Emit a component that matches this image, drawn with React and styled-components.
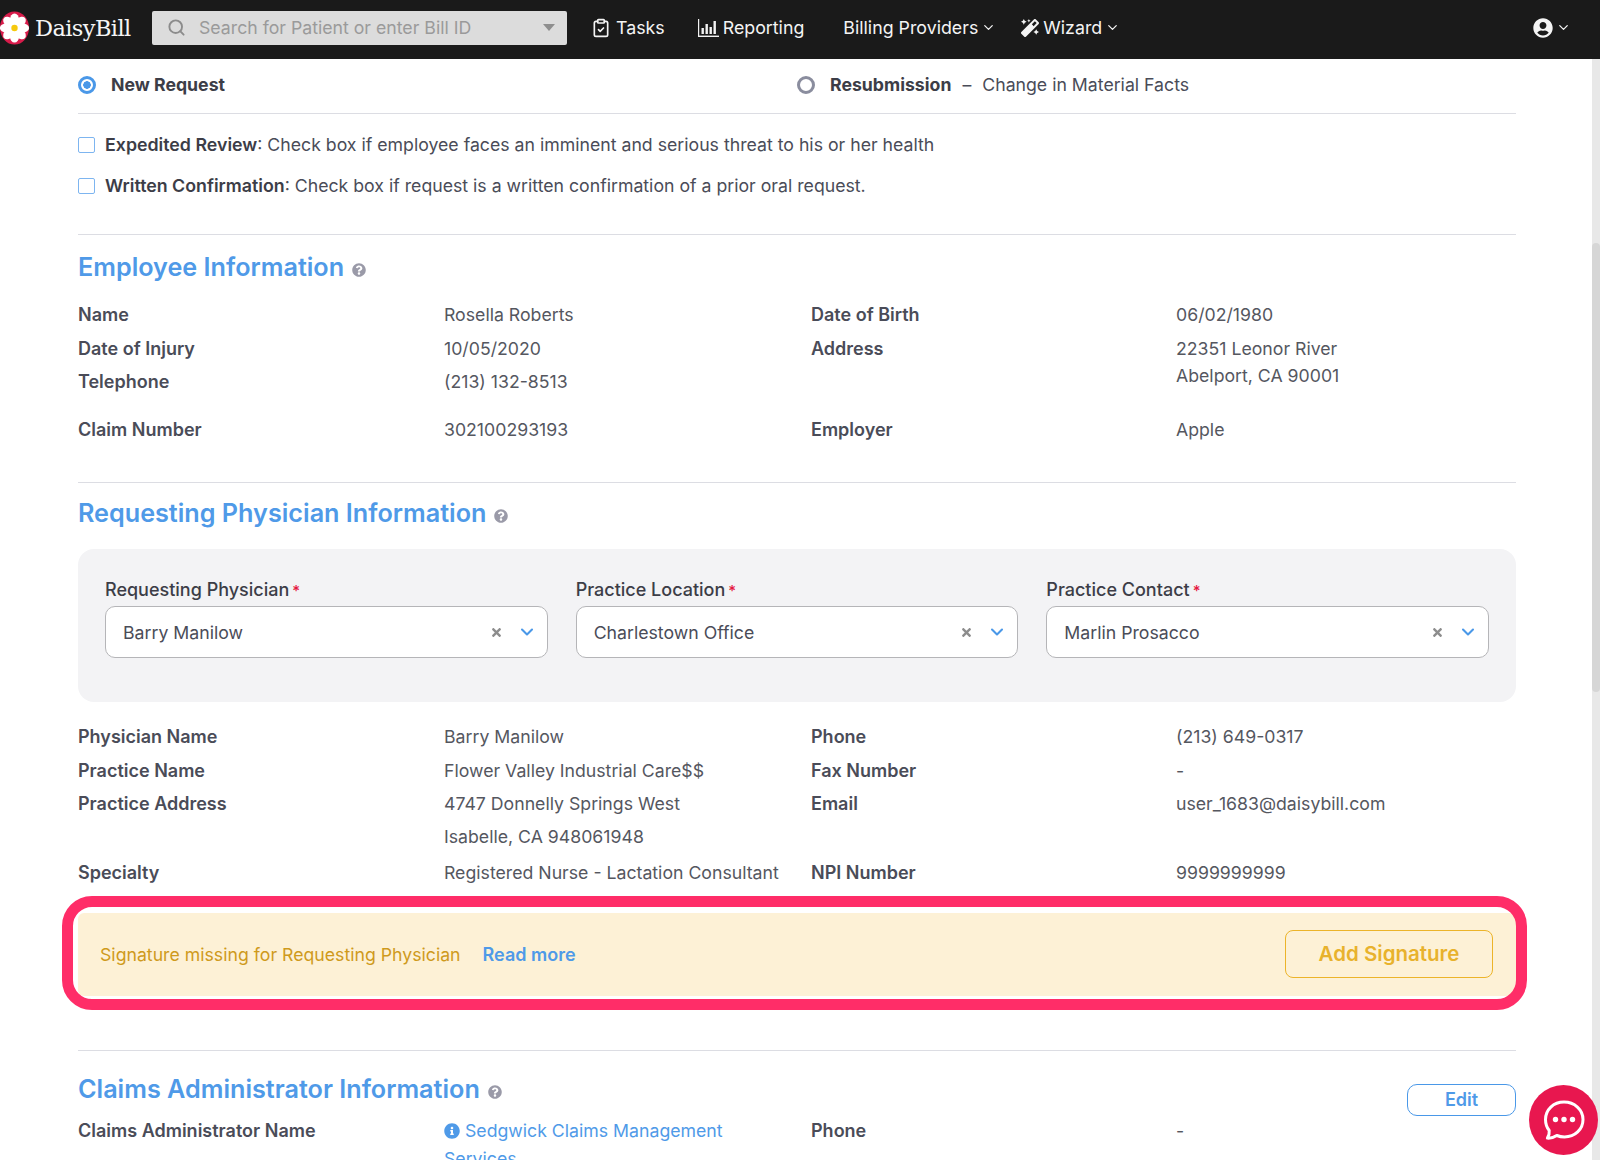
import React from 'react';
import styled, { createGlobalStyle } from 'styled-components';
import { ChevronDown, ClipboardCheck, Search } from 'lucide-react';
import { FaInfoCircle, FaMagic, FaQuestionCircle, FaTimes, FaUserCircle } from 'react-icons/fa';

const GlobalStyle = createGlobalStyle`
  html, body {
    margin: 0;
    padding: 0;
    background: #fff;
  }
  * {
    box-sizing: border-box;
  }
`;

const employeeRows = [
  { label: 'Name', value: 'Rosella Roberts', label2: 'Date of Birth', value2: '06/02/1980' },
  { label: 'Date of Injury', value: '10/05/2020', label2: 'Address', value2: '22351 Leonor River', line2: 'Abelport, CA 90001', rowSpan: 2 },
  { label: 'Telephone', value: '(213) 132-8513' },
  { label: 'Claim Number', value: '302100293193', label2: 'Employer', value2: 'Apple', top: 14 },
];

const physicianRows = [
  { label: 'Physician Name', value: 'Barry Manilow', label2: 'Phone', value2: '(213) 649-0317' },
  { label: 'Practice Name', value: 'Flower Valley Industrial Care$$', label2: 'Fax Number', value2: '-' },
  { label: 'Practice Address', value: '4747 Donnelly Springs West', line: 'Isabelle, CA 948061948', label2: 'Email', value2: 'user_1683@daisybill.com' },
  { label: 'Specialty', value: 'Registered Nurse - Lactation Consultant', label2: 'NPI Number', value2: '9999999999', top: 3 },
];

const selects = [
  { label: 'Requesting Physician', value: 'Barry Manilow' },
  { label: 'Practice Location', value: 'Charlestown Office' },
  { label: 'Practice Contact', value: 'Marlin Prosacco' },
];

const DaisyLogo = () => (
  <svg width="30" height="34" viewBox="0 0 30 34">
    <ellipse cx="14.5" cy="17" rx="14.5" ry="16.5" fill="#d81b4a" />
    {[0, 45, 90, 135, 180, 225, 270, 315].map((angle) => (
      <ellipse key={angle} cx="14.5" cy="9" rx="4.6" ry="6.6" fill="#fff" transform={`rotate(${angle} 14.5 17)`} />
    ))}
    <circle cx="14.5" cy="17" r="3.2" fill="#f6c90e" />
  </svg>
);

const BarsIcon = () => (
  <svg width="21" height="18" viewBox="0 0 21 18" fill="#f2f2f2">
    <rect x="0" y="0" width="1.2" height="18" />
    <rect x="0" y="16.6" width="21" height="1.4" />
    <rect x="3.5" y="9" width="2.4" height="6" />
    <rect x="7.5" y="5" width="2.4" height="10" />
    <rect x="11.5" y="8" width="2.4" height="7" />
    <rect x="15.5" y="2" width="2.4" height="13" />
  </svg>
);

const ChatIcon = () => (
  <svg width="44" height="44" viewBox="0 0 44 44" fill="none">
    <path
      d="M22 4C11.5 4 3.5 11.6 3.5 21.5c0 4.2 1.3 8 3.7 11 .4 3-.6 5.6-1.8 7.6 3.2.2 6.6-.7 9.4-2.6 2.4 1 5 1.5 7.7 1.5 10.5 0 18.5-7.6 18.5-17.5S32.5 4 22 4z"
      stroke="#fff"
      strokeWidth="3"
      strokeLinejoin="round"
    />
    <circle cx="13.5" cy="21.5" r="2.7" fill="#fff" />
    <circle cx="22" cy="21.5" r="2.7" fill="#fff" />
    <circle cx="30.5" cy="21.5" r="2.7" fill="#fff" />
  </svg>
);

const InfoRows = ({ rows }) => (
  <InfoGrid>
    {rows.map((row) => (
      <InfoRow key={row.label} $top={row.top}>
        <InfoLabel>{row.label}</InfoLabel>
        <InfoValue>
          {row.value}
          {row.line && <ExtraLine>{row.line}</ExtraLine>}
        </InfoValue>
        {row.label2 && <InfoLabel>{row.label2}</InfoLabel>}
        {row.label2 && (
          <InfoValue $overhang={row.rowSpan}>
            {row.value2}
            {row.line2 && <ExtraLine $tight>{row.line2}</ExtraLine>}
          </InfoValue>
        )}
      </InfoRow>
    ))}
  </InfoGrid>
);

const App = () => {
  return (
    <Page>
      <GlobalStyle />
      <TopBar>
        <Brand>
          <DaisyLogo />
          <BrandName>DaisyBill</BrandName>
        </Brand>
        <SearchBox>
          <Search size={19} color="#8c8c8c" strokeWidth={2.4} />
          <SearchText>Search for Patient or enter Bill ID</SearchText>
          <SearchCaret />
        </SearchBox>
        <NavItem $left={24}>
          <ClipboardCheck size={20} strokeWidth={2} />
          <NavText $gap={5}>Tasks</NavText>
        </NavItem>
        <NavItem $left={30}>
          <BarsIcon />
          <NavText $gap={4}>Reporting</NavText>
        </NavItem>
        <NavItem $left={36}>
          <NavText>Billing Providers</NavText>
          <ChevronDown size={15} />
        </NavItem>
        <NavItem $left={25}>
          <FaMagic size={18} />
          <NavText $gap={4}>Wizard</NavText>
          <ChevronDown size={15} />
        </NavItem>
        <UserMenu>
          <FaUserCircle size={20} />
          <ChevronDown size={15} />
        </UserMenu>
      </TopBar>

      <Body>
        <Content>
          <RequestRow>
            <RequestOption>
              <Radio $checked />
              <RequestName $gap={15}>New Request</RequestName>
            </RequestOption>
            <RequestOption>
              <Radio />
              <RequestName $gap={15}>Resubmission</RequestName>
              <RequestNote>–</RequestNote>
              <RequestNote>Change in Material Facts</RequestNote>
            </RequestOption>
          </RequestRow>
          <Divider />

          <CheckRow $top={20}>
            <CheckBox />
            <CheckText><strong>Expedited Review</strong>: Check box if employee faces an imminent and serious threat to his or her health</CheckText>
          </CheckRow>
          <CheckRow $top={20}>
            <CheckBox />
            <CheckText><strong>Written Confirmation</strong>: Check box if request is a written confirmation of a prior oral request.</CheckText>
          </CheckRow>
          <Divider $top={38} />

          <SectionTitle $top={15}>
            Employee Information
            <FaQuestionCircle size={14} />
          </SectionTitle>
          <InfoBlock $top={14}>
            <InfoRows rows={employeeRows} />
          </InfoBlock>
          <Divider $top={36} />

          <SectionTitle $top={13}>
            Requesting Physician Information
            <FaQuestionCircle size={14} />
          </SectionTitle>

          <SelectPanel>
            {selects.map((item) => (
              <SelectField key={item.label}>
                <SelectLabel>
                  {item.label}
                  <Required>*</Required>
                </SelectLabel>
                <SelectInput>
                  <SelectValue>{item.value}</SelectValue>
                  <FaTimes size={13} color="#8d8d8d" />
                  <ChevronDown size={20} color="#4a98e8" strokeWidth={2.5} />
                </SelectInput>
              </SelectField>
            ))}
          </SelectPanel>

          <InfoBlock $top={18}>
            <InfoRows rows={physicianRows} />
          </InfoBlock>

          <Alert>
            <AlertHighlight />
            <AlertText>Signature missing for Requesting Physician</AlertText>
            <ReadMore>Read more</ReadMore>
            <SignatureButton>Add Signature</SignatureButton>
          </Alert>

          <Divider $top={54} />

          <ClaimsHeader>
            <SectionTitle $top={13}>
              Claims Administrator Information
              <FaQuestionCircle size={14} />
            </SectionTitle>
            <EditButton>Edit</EditButton>
          </ClaimsHeader>
          <ClaimsRow>
            <InfoLabel>Claims Administrator Name</InfoLabel>
            <ClaimsLink>
              <FaInfoCircle size={16} />
              {' '}Sedgwick Claims Management Services
            </ClaimsLink>
            <InfoLabel>Phone</InfoLabel>
            <InfoValue>-</InfoValue>
          </ClaimsRow>
        </Content>
        <ScrollTrack>
          <ScrollThumb />
        </ScrollTrack>
      </Body>

      <ChatBubble>
        <ChatIcon />
      </ChatBubble>
    </Page>
  );
};

export default App;

// Styled Components
const Page = styled.div`
  position: relative;
  width: 1600px;
  height: 1160px;
  overflow: hidden;
  background: #fff;
  font-family: 'Inter', 'Liberation Sans', sans-serif;
  color: #4a4c58;
`;

const TopBar = styled.header`
  display: flex;
  align-items: center;
  height: 59px;
  padding-bottom: 4px;
  background: #1a1a1a;
  color: #f4f4f4;
`;

const Brand = styled.div`
  display: flex;
  align-items: center;
  gap: 5px;
  width: 152px;
`;

const BrandName = styled.span`
  font-family: 'DejaVu Serif', 'Liberation Serif', serif;
  font-size: 22.5px;
  letter-spacing: -0.6px;
  color: #f5f5f5;
`;

const SearchBox = styled.div`
  display: flex;
  align-items: center;
  width: 415px;
  height: 34px;
  padding: 0 12px 0 15px;
  background: #dcdcdc;
  border-radius: 2px;
`;

const SearchText = styled.span`
  flex: 1;
  margin-left: 13px;
  font-size: 17.7px;
  color: #9a9a9a;
`;

const SearchCaret = styled.span`
  width: 0;
  height: 0;
  border-left: 6px solid transparent;
  border-right: 6px solid transparent;
  border-top: 7px solid #8e8e8e;
`;

const NavItem = styled.div`
  display: flex;
  align-items: center;
  margin-left: ${(props) => props.$left}px;
`;

const NavText = styled.span`
  margin-left: ${(props) => props.$gap || 0}px;
  margin-right: 3px;
  font-size: 17.8px;
  color: #f4f4f4;
`;

const UserMenu = styled.div`
  display: flex;
  align-items: center;
  gap: 3px;
  margin-left: auto;
  margin-right: 29px;
`;

const Body = styled.div`
  display: flex;
  height: 1101px;
`;

const Content = styled.main`
  width: 1592px;
  padding: 0 76px 0 78px;
`;

const ScrollTrack = styled.div`
  width: 8px;
  padding-top: 184px;
  background: #e8e8e8;
`;

const ScrollThumb = styled.div`
  height: 449px;
  background: #d6d6d6;
  border-radius: 4px;
`;

const RequestRow = styled.div`
  display: grid;
  grid-template-columns: 719px 1fr;
  height: 54px;
  padding-bottom: 3px;
  align-items: center;
`;

const RequestOption = styled.div`
  display: flex;
  align-items: center;
`;

const Radio = styled.span`
  width: 18px;
  height: 18px;
  border-radius: 50%;
  border: 3px solid ${(props) => (props.$checked ? '#4a98e8' : '#8a8d9e')};
  background: ${(props) => (props.$checked ? 'radial-gradient(circle, #4a98e8 0 3.5px, #fff 4px)' : '#fff')};
`;

const RequestName = styled.span`
  margin-left: ${(props) => props.$gap}px;
  font-size: 17.7px;
  font-weight: 700;
  color: #3c3d47;
`;

const RequestNote = styled.span`
  margin-left: 11px;
  font-size: 17.7px;
  color: #4a4c58;
`;

const Divider = styled.hr`
  margin: ${(props) => props.$top || 0}px 0 0;
  border: 0;
  border-top: 1.5px solid #dcdde3;
`;

const CheckRow = styled.label`
  display: flex;
  align-items: center;
  margin-top: ${(props) => props.$top}px;
  height: 21px;
`;

const CheckBox = styled.span`
  flex: none;
  width: 17px;
  height: 16px;
  border: 1.5px solid #7db5f0;
  border-radius: 2px;
  background: #fff;
`;

const CheckText = styled.span`
  margin-left: 10px;
  font-size: 17.7px;
  color: #4a4c58;

  strong {
    font-size: 17.8px;
    font-weight: 600;
    color: #3c3d47;
  }
`;

const SectionTitle = styled.h2`
  display: flex;
  align-items: center;
  gap: 8px;
  margin: ${(props) => props.$top}px 0 0;
  font-size: 25.2px;
  line-height: 34px;
  font-weight: 600;
  color: #4f9ae8;

  svg {
    margin-top: 6px;
    color: #9a9aa8;
  }
`;

const InfoBlock = styled.div`
  margin-top: ${(props) => props.$top}px;
`;

const InfoGrid = styled.div`
  display: flex;
  flex-direction: column;
`;

const InfoRow = styled.div`
  display: grid;
  grid-template-columns: 366px 367px 365px 1fr;
  margin-top: ${(props) => props.$top || 0}px;
  line-height: 33.5px;
  font-size: 17.7px;
`;

const InfoLabel = styled.div`
  font-size: 18px;
  font-weight: 600;
  color: #4a4c58;
`;

const InfoValue = styled.div`
  color: #55575f;
  height: ${(props) => (props.$overhang ? '33.5px' : 'auto')};
`;

const ExtraLine = styled.div`
  margin-top: ${(props) => (props.$tight ? -6 : -1)}px;
`;

const SelectPanel = styled.section`
  display: grid;
  grid-template-columns: repeat(3, 1fr);
  gap: 28px;
  height: 153px;
  margin-top: 19px;
  padding: 28px 27px 0;
  background: #f3f3f5;
  border-radius: 16px;
`;

const SelectField = styled.div`
  display: flex;
  flex-direction: column;
`;

const SelectLabel = styled.div`
  height: 29px;
  font-size: 18px;
  line-height: 26px;
  font-weight: 500;
  color: #3c3d47;
`;

const Required = styled.span`
  margin-left: 3px;
  font-size: 15px;
  color: #e5173f;
`;

const SelectInput = styled.div`
  display: flex;
  align-items: center;
  gap: 14px;
  height: 52px;
  padding: 0 10px 0 17px;
  background: #fff;
  border: 1.5px solid #b5b5b8;
  border-radius: 10px;
`;

const SelectValue = styled.span`
  flex: 1;
  font-size: 17.7px;
  color: #4a4c58;
`;

const Alert = styled.div`
  position: relative;
  display: flex;
  align-items: center;
  height: 83px;
  margin-top: 23px;
  padding: 0 23px 0 22px;
  background: #fdf1d6;
  border-radius: 6px;
`;

const AlertHighlight = styled.span`
  position: absolute;
  inset: -17px -11px -14px -16px;
  border: 11px solid #ff2d68;
  border-radius: 30px;
  pointer-events: none;
`;

const AlertText = styled.span`
  font-size: 17.7px;
  color: #cf9a1c;
`;

const ReadMore = styled.a`
  margin-left: 22px;
  font-size: 18px;
  font-weight: 600;
  color: #4f9ae8;
`;

const SignatureButton = styled.button`
  width: 208px;
  height: 48px;
  margin-left: auto;
  padding-bottom: 3px;
  background: transparent;
  border: 1.5px solid #ecb429;
  border-radius: 8px;
  font-family: inherit;
  font-size: 20.5px;
  font-weight: 600;
  color: #e8b22c;
`;

const ClaimsHeader = styled.div`
  display: flex;
  justify-content: space-between;
  height: 63px;
`;

const EditButton = styled.button`
  width: 109px;
  height: 32px;
  margin-top: 33px;
  background: #fff;
  border: 1.5px solid #4a98e8;
  border-radius: 10px;
  font-family: inherit;
  font-size: 18px;
  font-weight: 600;
  color: #4f9ae8;
`;

const ClaimsRow = styled.div`
  display: grid;
  grid-template-columns: 366px 367px 365px 1fr;
  font-size: 17.7px;
  line-height: 33.5px;
`;

const ClaimsLink = styled.a`
  width: 290px;
  line-height: 28px;
  padding-top: 3px;
  color: #4f9ae8;

  svg {
    vertical-align: -2px;
  }
`;

const ChatBubble = styled.button`
  position: absolute;
  right: 2px;
  top: 1085px;
  display: flex;
  align-items: center;
  justify-content: center;
  width: 69px;
  height: 70px;
  padding: 0;
  background: #e8174f;
  border: 0;
  border-radius: 50%;
`;
